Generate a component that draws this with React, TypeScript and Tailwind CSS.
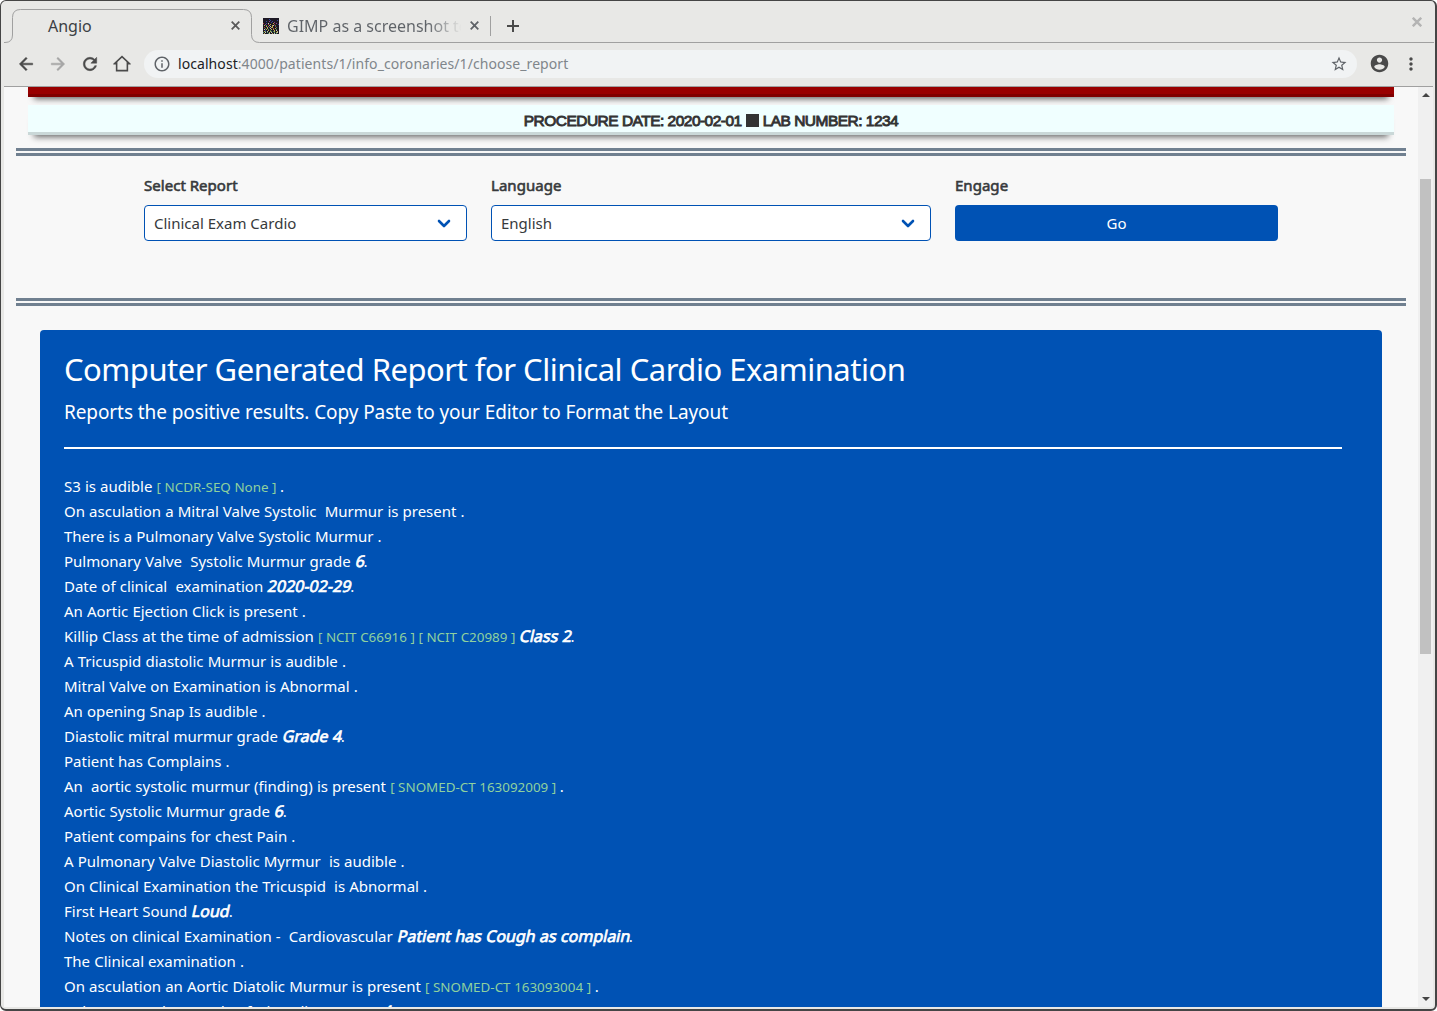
import React from 'react';

const FAVICON = [
  '................', '......b.........', '.......b......b.', '...b..p..b......',
  '........b..p....', 'r..b.w....y..p..', '..p..r.y...r...b', '.y.g..y..yw.g...',
  '...y.p.w.y..r...', '.r..y.g.yy...g..', '..g.y..w..r.y...', '.w.y.g..y.y..g..',
  '..b..y.g...y.w..', '.yg.w..yg.gy..y.', 'g.w.g.y.w..g.yw.', '.y...gw..y.w.g..',
];
const DOTS: Record<string, string> = { b: '#3c4fb0', p: '#a4459a', r: '#c0443c', y: '#d8c65a', g: '#4f9a6a', w: '#e2e2d8' };

function Favicon() {
  return (
    <svg width="16" height="16" viewBox="0 0 16 16" shapeRendering="crispEdges" className="shrink-0">
      <rect width="16" height="16" fill="#1c1824" />
      {FAVICON.flatMap((row, y) =>
        row.split('').map((c, x) => (c === '.' ? null : <rect key={`${x}-${y}`} x={x} y={y} width="1" height="1" fill={DOTS[c]} opacity="0.85" />)),
      )}
    </svg>
  );
}

function Cross({ className = '', size = 9, stroke = 1.8 }: { className?: string; size?: number; stroke?: number }) {
  return (
    <svg width={size} height={size} viewBox="0 0 9 9" fill="none" stroke="currentColor" strokeWidth={stroke} className={`shrink-0 ${className}`}>
      <path d="M0.7 0.7 8.3 8.3M8.3 0.7 0.7 8.3" />
    </svg>
  );
}

function MIcon({ d, className = '', size = 20 }: { d: string; className?: string; size?: number }) {
  return (
    <svg width={size} height={size} viewBox="0 0 24 24" fill="currentColor" className={`shrink-0 ${className}`}>
      <path d={d} />
    </svg>
  );
}

function TabStrip() {
  return (
    <div className="relative flex h-[42px] items-center pt-[7px] text-base">
      <svg className="absolute left-[3px] top-0" width="1430" height="43" fill="none" stroke="#a0a0a0">
        <path d="M0 41.5h1Q8.500 41.5 8.500 34V16.500Q8.500 8.500 16.500 8.500H239.500Q247.500 8.500 247.500 16.500V33.500Q247.500 41.500 255.500 41.500H1430" />
      </svg>
      <div className="flex w-[250px] items-center pl-[47px] text-[#3c3f43]">
        <span className="w-[183px] leading-6">Angio</span>
        <Cross className="text-[#5a5a5a]" />
      </div>
      <div className="flex items-center pl-3 text-[#5f6368]">
        <Favicon />
        <span className="ml-2 w-[176px] overflow-hidden whitespace-nowrap bg-gradient-to-r from-[#5f6368] from-80% to-transparent to-[99%] bg-clip-text leading-6 text-transparent">
          GIMP as a screenshot tool
        </span>
        <Cross className="ml-[7px]" />
        <span className="ml-[11px] h-[20px] w-px bg-[#a0a0a0]" />
        <svg className="ml-4" width="12" height="12" stroke="#4a4a4a" strokeWidth="2">
          <path d="M6 0v12M0 6h12" />
        </svg>
      </div>
      <Cross className="absolute left-[1411px] top-4 text-[#b4b4b4]" size={10} stroke={2.2} />
    </div>
  );
}

function Toolbar() {
  return (
    <div className="flex h-[43px] items-center pb-[2px] pl-[15px] text-[#4a4a4a]">
      <MIcon className="stroke-current stroke-[0.6]" d="M20 11H7.830l5.590-5.590L12 4l-8 8 8 8 1.410-1.410L7.830 13H20v-2z" />
      <MIcon className="ml-3 stroke-current stroke-[0.6] text-[#a6a6a6]" d="M12 4l-1.410 1.410L16.170 11H4v2h12.170l-5.580 5.590L12 20l8-8z" />
      <MIcon className="ml-3 stroke-current stroke-[0.6]" d="M17.650 6.350C16.200 4.900 14.210 4 12 4c-4.420 0-7.990 3.580-7.990 8s3.570 8 7.990 8c3.730 0 6.840-2.550 7.730-6h-2.080c-.82 2.330-3.040 4-5.650 4-3.310 0-6-2.690-6-6s2.690-6 6-6c1.660 0 3.140.690 4.220 1.780L13 11h7V4l-2.350 2.350z" />
      <MIcon className="ml-3" d="M12 4.600l5.500 5.100V19h-11V9.700zM12 1.800 1.500 11.600v1.100H4.600V21H19.400v-8.300h3.100v-1.100z" />
      <div className="ml-3 flex h-7 w-[1213px] items-center rounded-full bg-[#f1f3f4] pl-[9px] pr-[9px] text-sm">
        <svg width="18" height="18" viewBox="0 0 24 24" fill="#5f6368">
          <path d="M11 17h2v-6h-2v6zm1-15C6.480 2 2 6.480 2 12s4.480 10 10 10 10-4.480 10-10S17.520 2 12 2zm0 18c-4.410 0-8-3.590-8-8s3.590-8 8-8 8 3.590 8 8-3.590 8-8 8zM11 9h2V7h-2v2z" />
        </svg>
        <span className="ml-[7px] flex-1 tracking-[0.07px] text-[#80868b]">
          <span className="text-[#202124]">localhost</span>:4000/patients/1/info_coronaries/1/choose_report
        </span>
        <MIcon size={18} className="text-[#5f6368]" d="M22 9.240l-7.190-.62L12 2 9.190 8.630 2 9.240l5.460 4.730L5.820 21 12 17.270 18.180 21l-1.630-7.030L22 9.240zM12 15.400l-3.760 2.270 1-4.280-3.320-2.880 4.380-.38L12 6.100l1.710 4.040 4.380.380-3.320 2.880 1 4.280L12 15.400z" />
      </div>
      <MIcon size={21} className="ml-[11.5px]" d="M12 2C6.480 2 2 6.480 2 12s4.480 10 10 10 10-4.480 10-10S17.520 2 12 2zm0 3c1.660 0 3 1.340 3 3s-1.340 3-3 3-3-1.340-3-3 1.340-3 3-3zm0 14.200c-2.500 0-4.710-1.280-6-3.220.030-1.990 4-3.080 6-3.080 1.990 0 5.970 1.090 6 3.080-1.290 1.940-3.500 3.220-6 3.220z" />
      <MIcon size={20} className="ml-[11.5px]" d="M12 8c1.100 0 2-.9 2-2s-.9-2-2-2-2 .9-2 2 .9 2 2 2zm0 2c-1.100 0-2 .9-2 2s.9 2 2 2 2-.9 2-2-.9-2-2-2zm0 6c-1.100 0-2 .9-2 2s.9 2 2 2 2-.9 2-2-.9-2-2-2z" />
    </div>
  );
}

function DoubleRule() {
  return <div className="h-2 border-y-[3px] border-[#708090]" />;
}

function Select({ label, value, className }: { label: string; value: string; className: string }) {
  return (
    <div className={className}>
      <Label>{label}</Label>
      <div className="flex h-9 items-center justify-between rounded border border-[#0052b4] bg-white pl-[9px] pr-[15px]">
        <span>{value}</span>
        <svg width="14" height="9" fill="none" stroke="#0052b4" strokeWidth="2.6" strokeLinecap="round" strokeLinejoin="round">
          <path d="M2 2l5 5 5-5" />
        </svg>
      </div>
    </div>
  );
}

function Label({ children }: { children: React.ReactNode }) {
  return <div className="mb-2 h-6 leading-6 tracking-[0.03px] [-webkit-text-stroke:0.6px_currentColor]">{children}</div>;
}

type Line = { text: string; codes?: string; value?: string };
const LINES: Line[] = [
  { text: 'S3 is audible', codes: '[ NCDR-SEQ None ]' },
  { text: 'On asculation a Mitral Valve Systolic  Murmur is present' },
  { text: 'There is a Pulmonary Valve Systolic Murmur' },
  { text: 'Pulmonary Valve  Systolic Murmur grade', value: '6' },
  { text: 'Date of clinical  examination', value: '2020-02-29' },
  { text: 'An Aortic Ejection Click is present' },
  { text: 'Killip Class at the time of admission', codes: '[ NCIT C66916 ] [ NCIT C20989 ]', value: 'Class 2' },
  { text: 'A Tricuspid diastolic Murmur is audible' },
  { text: 'Mitral Valve on Examination is Abnormal' },
  { text: 'An opening Snap Is audible' },
  { text: 'Diastolic mitral murmur grade', value: 'Grade 4' },
  { text: 'Patient has Complains' },
  { text: 'An  aortic systolic murmur (finding) is present', codes: '[ SNOMED-CT 163092009 ]' },
  { text: 'Aortic Systolic Murmur grade', value: '6' },
  { text: 'Patient compains for chest Pain' },
  { text: 'A Pulmonary Valve Diastolic Myrmur  is audible' },
  { text: 'On Clinical Examination the Tricuspid  is Abnormal' },
  { text: 'First Heart Sound', value: 'Loud' },
  { text: 'Notes on clinical Examination -  Cardiovascular', value: 'Patient has Cough as complain' },
  { text: 'The Clinical examination' },
  { text: 'On asculation an Aortic Diatolic Murmur is present', codes: '[ SNOMED-CT 163093004 ]' },
  { text: 'Pulmonary Valve  Grade of Diastolic Murmur', value: '4' },
];

function ReportLine({ text, codes, value }: Line) {
  return (
    <div className="h-[25px] whitespace-pre leading-[25px] [word-spacing:0.2px]">
      {text}{' '}
      {codes && <span className="text-[13.4px] leading-none text-[#8fd19e] [word-spacing:0.1px]">{codes} </span>}
      {value && (
        <span className="-mr-[1.5px] ml-px inline-block -skew-x-12 text-base leading-[25px] [-webkit-text-stroke:0.7px_currentColor]">{value}</span>
      )}
      .
    </div>
  );
}

function Page() {
  return (
    <main className="w-[1414px] shrink-0 overflow-hidden px-3 text-[15px] text-[#373a3c]">
      <div className="px-3">
        <div className="-mt-[30px] h-10 border-b-[3px] border-[#800000] bg-[#990000] shadow-[0_8px_6px_-6px_#666]" />
        <div className="mt-2 flex h-[30px] items-center justify-center whitespace-pre border-b-[3px] border-[#cad8d8] bg-[#f0ffff] pt-[4px] font-['Liberation_Sans',Arial,sans-serif] text-[15.5px] tracking-[-0.52px] text-[#333] shadow-[0_8px_6px_-6px_#666] [-webkit-text-stroke:0.9px_currentColor]">
          PROCEDURE DATE: 2020-02-01
          <span className="mx-1 mb-px h-[13px] w-[13px] bg-[#333]" />
          LAB NUMBER: 1234
        </div>
      </div>
      <div className="mt-[13px]">
        <DoubleRule />
      </div>
      <div className="mx-auto mt-[17px] flex h-[125px] w-[1134px] gap-6">
        <Select className="w-[323px]" label="Select Report" value="Clinical Exam Cardio" />
        <Select className="w-[440px]" label="Language" value="English" />
        <div className="w-[323px]">
          <Label>Engage</Label>
          <div className="flex h-9 items-center justify-center rounded bg-[#0052b4] text-white">Go</div>
        </div>
      </div>
      <DoubleRule />
      <section className="mx-6 mt-6 h-[700px] rounded bg-[#0052b4] px-6 pt-[17px] text-white">
        <h1 className="whitespace-nowrap text-[31px] leading-[44px] tracking-[-0.5px]">Computer Generated Report for Clinical Cardio Examination</h1>
        <p className="whitespace-nowrap text-[19px] leading-[42px] tracking-[-0.09px]">Reports the positive results. Copy Paste to your Editor to Format the Layout</p>
        <div className="mb-[25px] mr-4 mt-[14px] h-0.5 bg-white" />
        {LINES.map((line) => (
          <ReportLine key={line.text} {...line} />
        ))}
      </section>
    </main>
  );
}

export default function App() {
  return (
    <div className="h-[1011px] w-[1437px] overflow-hidden bg-white">
      <div className="flex h-full flex-col overflow-hidden rounded-md border border-b-2 border-r-2 border-[#454545] bg-[#e8e8e6] font-['Noto_Sans',sans-serif]">
        <TabStrip />
        <Toolbar />
        <div className="ml-[3px] flex h-[921px] w-[1429px] border-t border-[#a0a0a0] bg-[#f8f8f8]">
          <Page />
          <div className="flex w-[15px] shrink-0 flex-col items-center bg-[#f0f0f0] pt-1.5">
            <svg className="shrink-0" width="8" height="4" fill="#454545"><path d="M0 4 4 0l4 4z" /></svg>
            <div className="mt-[82px] h-[475px] w-[11px] shrink-0 bg-[#c1c1c1]" />
            <svg className="mt-[343px] shrink-0" width="8" height="4" fill="#454545"><path d="M0 0l4 4 4-4z" /></svg>
          </div>
        </div>
      </div>
    </div>
  );
}
